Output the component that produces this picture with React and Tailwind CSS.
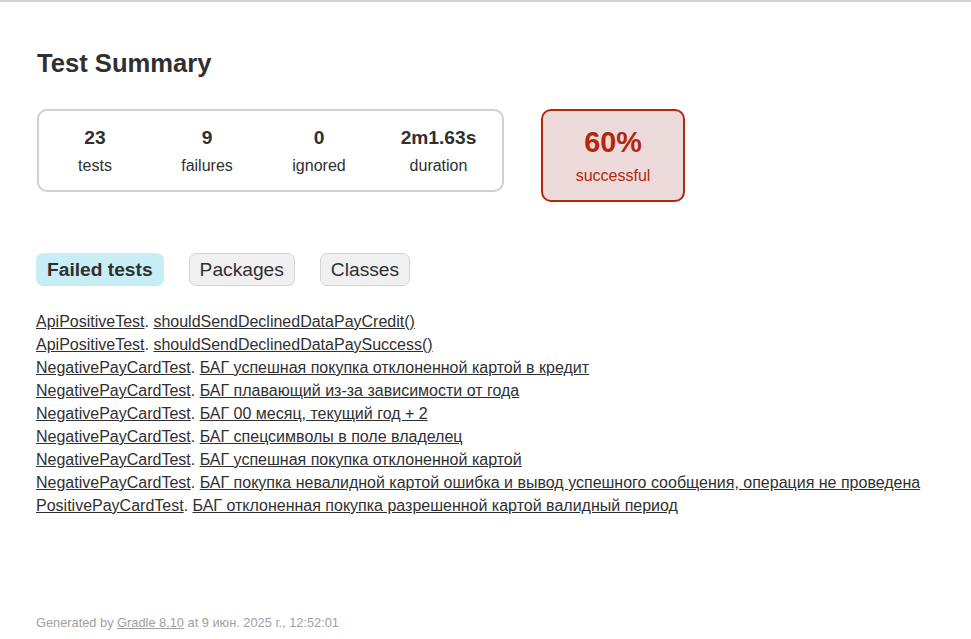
const failed = [
  ["ApiPositiveTest", "shouldSendDeclinedDataPayCredit()"],
  ["ApiPositiveTest", "shouldSendDeclinedDataPaySuccess()"],
  ["NegativePayCardTest", "БАГ успешная покупка отклоненной картой в кредит"],
  ["NegativePayCardTest", "БАГ плавающий из-за зависимости от года"],
  ["NegativePayCardTest", "БАГ 00 месяц, текущий год + 2"],
  ["NegativePayCardTest", "БАГ спецсимволы в поле владелец"],
  ["NegativePayCardTest", "БАГ успешная покупка отклоненной картой"],
  ["NegativePayCardTest", "БАГ покупка невалидной картой ошибка и вывод успешного сообщения, операция не проведена"],
  ["PositivePayCardTest", "БАГ отклоненная покупка разрешенной картой валидный период"],
]

function InfoBox({ value, label, wide }) {
  return (
    <div className={`${wide ? "w-[127px]" : "w-[112px]"} pt-[16px] pb-[15px] text-center`}>
      <p className="text-[19.2px] leading-[22px] font-bold mb-[8px]">{value}</p>
      <p className="text-[16px] leading-[18px]">{label}</p>
    </div>
  )
}

export default function App() {
  return (
    <div className="min-h-[639px] bg-white text-[#303030] font-['Liberation_Sans',Arial,sans-serif] text-[16px]">
      <div className="h-[2px] bg-[#d4d4d4]" />

      <div className="pl-[37px] pr-[50px]">
        <h1 className="mt-[47px] text-[25.6px] leading-[29px] font-bold whitespace-nowrap">
          Test Summary
        </h1>

        {/* summary */}
        <div className="mt-[31px] flex items-start">
          <div className="flex border-2 border-[#d0d0d0] rounded-[10px]">
            <InfoBox value="23" label="tests" />
            <InfoBox value="9" label="failures" />
            <InfoBox value="0" label="ignored" />
            <InfoBox value="2m1.63s" label="duration" wide />
          </div>

          <div className="ml-[37px] w-[144px] border-2 border-[#b3280c] bg-[#ecdada] rounded-[10px] text-[#b3280c] pt-[15px] pb-[15px] text-center">
            <p className="text-[28.8px] leading-[33px] font-bold mb-[8px]">60%</p>
            <p className="text-[16px] leading-[18px]">successful</p>
          </div>
        </div>

        {/* tabs */}
        <ul className="mt-[51px] -ml-px flex">
          <li className="mr-[25px] px-[10px] py-[5px] rounded-[7px] border border-[#c5f0f5] bg-[#c8eef5]">
            <span className="block text-[19.2px] leading-[21px] font-bold">Failed tests</span>
          </li>
          <li className="mr-[25px] px-[10px] py-[5px] rounded-[7px] border border-[#d4d4d4] bg-[#f0f0f0]">
            <a href="#packages" className="block text-[19.2px] leading-[21px]">Packages</a>
          </li>
          <li className="mr-[25px] px-[10px] py-[5px] rounded-[7px] border border-[#d4d4d4] bg-[#f0f0f0]">
            <a href="#classes" className="block text-[19.2px] leading-[21px]">Classes</a>
          </li>
        </ul>

        <ul className="mt-[27px] flex flex-col gap-[5px]">
          {failed.map(([cls, name], i) => (
            <li key={i} className="leading-[18px] whitespace-nowrap -ml-px">
              <a href="#" className="underline">{cls}</a>. <a href="#" className="underline">{name}</a>
            </li>
          ))}
        </ul>

        <div className="mt-[100px] text-[12.8px] leading-[15px] text-[#a0a0a0] -ml-px">
          Generated by <a href="#" className="underline">Gradle 8.10</a> at 9 июн. 2025 г., 12:52:01
        </div>
      </div>
    </div>
  )
}
